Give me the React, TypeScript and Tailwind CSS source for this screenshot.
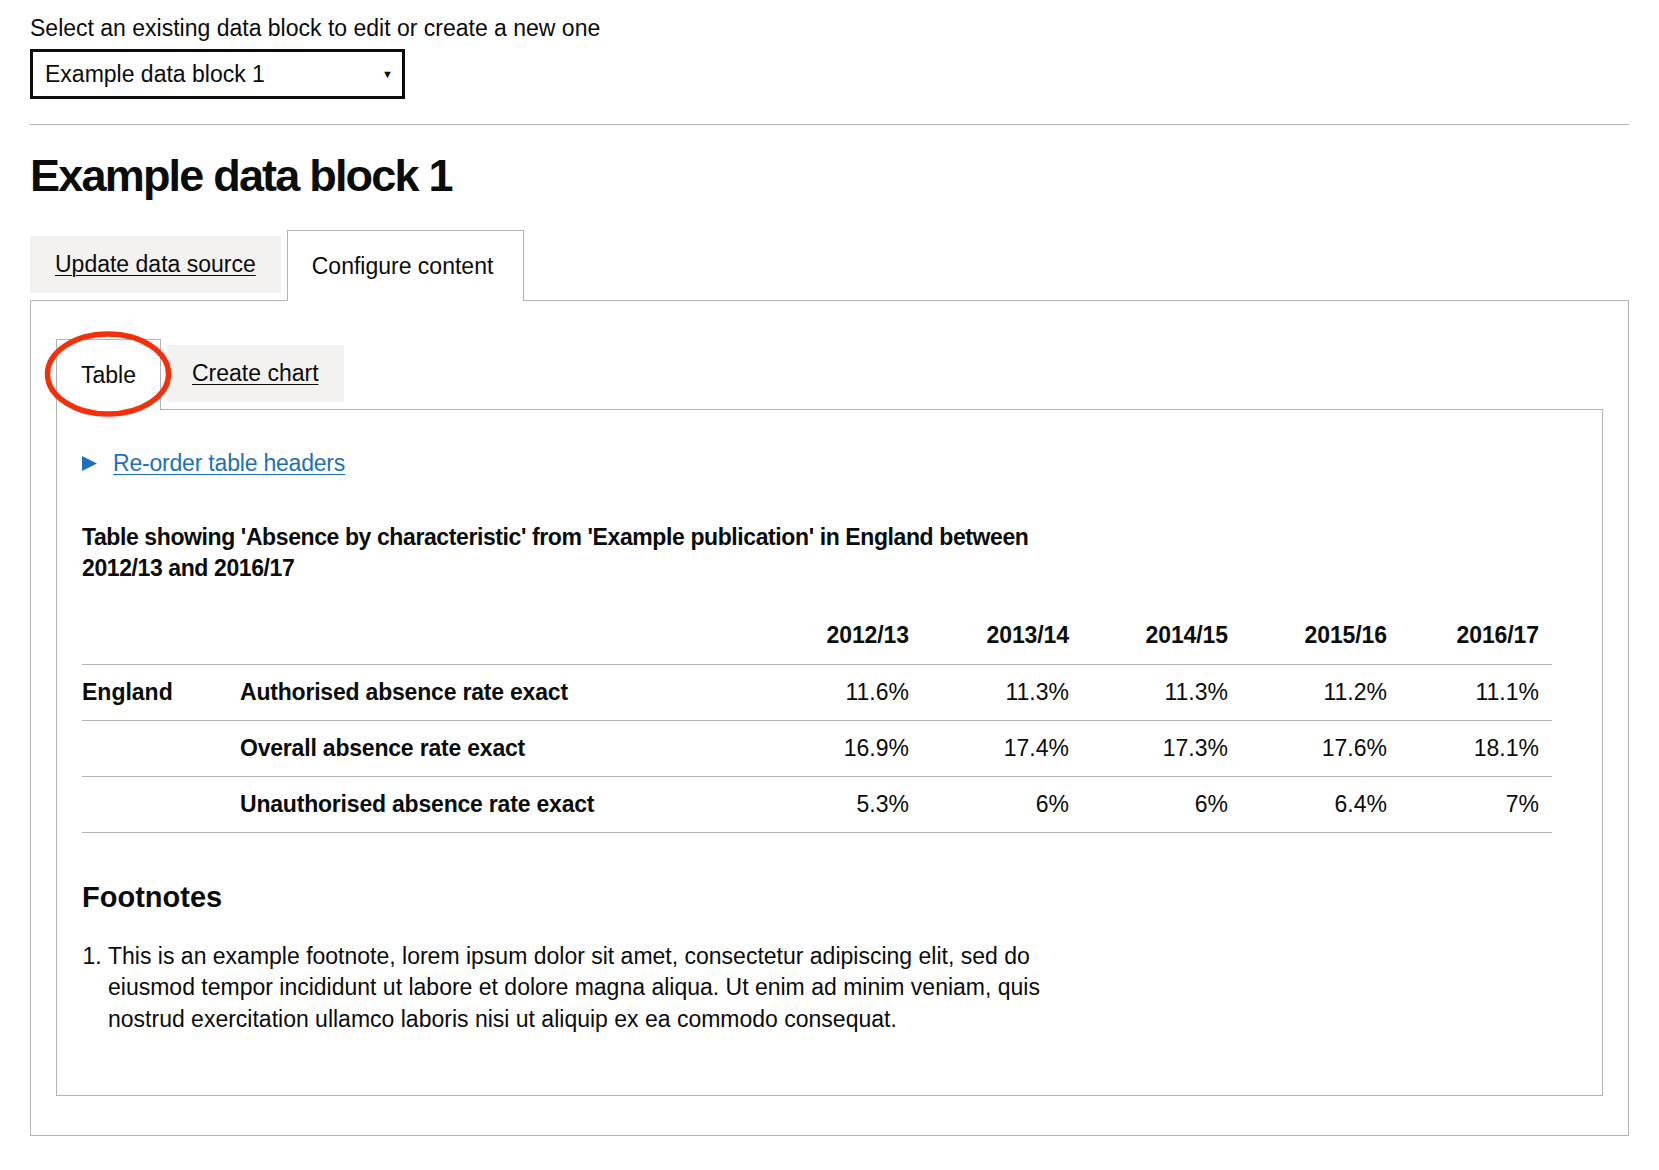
import React from "react";

type Row = {
  group?: string;
  label: string;
  values: string[];
};

const years = ["2012/13", "2013/14", "2014/15", "2015/16", "2016/17"];

const rows: Row[] = [
  { group: "England", label: "Authorised absence rate exact", values: ["11.6%", "11.3%", "11.3%", "11.2%", "11.1%"] },
  { label: "Overall absence rate exact", values: ["16.9%", "17.4%", "17.3%", "17.6%", "18.1%"] },
  { label: "Unauthorised absence rate exact", values: ["5.3%", "6%", "6%", "6.4%", "7%"] },
];

const numCols = ["w-[159px] pr-[20px]", "w-[160px] pr-[20px]", "w-[159px] pr-[20px]", "w-[159px] pr-[20px]", "w-[145px] pr-[13px]"];

const TabLink = ({ label }: { label: string }) => (
  <a href="#" className="mt-[6px] flex h-[57px] items-center bg-[#f3f2f1] px-[25px] text-[#0b0c0c] underline decoration-1 underline-offset-[3px]">
    {label}
  </a>
);

const TabSelected = ({ label, className = "" }: { label: string; className?: string }) => (
  <div className={`relative z-10 -mb-px flex h-[71px] items-center border border-b-0 border-[#b1b4b6] bg-white px-[24px] ${className}`}>
    {label}
  </div>
);

export default function App() {
  return (
    <div className="min-h-screen bg-white px-[30px] pt-[13px] text-[23px] leading-[31px] text-[#0b0c0c]" style={{ fontFamily: '"Liberation Sans", Arial, sans-serif' }}>
      <label className="block">Select an existing data block to edit or create a new one</label>
      <div className="mt-[5px] flex h-[50px] w-[375px] items-center justify-between border-[3px] border-[#0b0c0c] pl-[12px] pr-[9px]">
        <span>Example data block 1</span>
        <span className="text-[11px] leading-none">▼</span>
      </div>

      <hr className="mt-[25px] border-t border-[#b1b4b6]" />

      <h1 className="mt-[20px] text-[45px] font-bold leading-[62px] tracking-[-1.8px]">Example data block 1</h1>

      <div className="mt-[23px] flex items-start gap-[6px]">
        <TabLink label="Update data source" />
        <TabSelected label="Configure content" className="w-[237px]" />
      </div>

      <div className="border border-[#b1b4b6] px-[25px] pb-[39px] pt-[38px]">
        <div className="relative flex items-start gap-[6px]">
          <TabSelected label="Table" />
          <TabLink label="Create chart" />
          {/* red annotation circle */}
          <svg className="pointer-events-none absolute left-[-12px] top-[-8px] z-20" width="128" height="86" viewBox="0 0 128 86">
            <ellipse cx="64" cy="43" rx="60.5" ry="40" fill="none" stroke="#f4300b" strokeWidth="5.5" />
          </svg>
        </div>

        <div className="border border-[#b1b4b6] px-[25px] pb-[60px] pt-[38px]">
          <div className="flex items-center gap-[16px]">
            <svg width="15" height="15" viewBox="0 0 15 15">
              <polygon points="0,0 15,7.5 0,15" fill="#1d70b8" />
            </svg>
            <a href="#" className="tracking-[-0.2px] text-[#1d70b8] underline decoration-1 underline-offset-[3px]">Re-order table headers</a>
          </div>

          <div className="mr-[25px]">
            <p className="mt-[43px] max-w-[960px] font-bold tracking-[-0.4px]">
              Table showing 'Absence by characteristic' from 'Example publication' in England between 2012/13 and 2016/17
            </p>

            <table className="mt-[25px] w-full table-fixed border-collapse">
              <thead>
                <tr className="border-b border-[#b1b4b6]">
                  <th className="w-[158px]" />
                  <th />
                  {years.map((y, i) => (
                    <th key={y} className={`${numCols[i]} h-[55px] pb-[2px] text-right font-bold tracking-[-0.1px]`}>
                      {y}
                    </th>
                  ))}
                </tr>
              </thead>
              <tbody>
                {rows.map((r) => (
                  <tr key={r.label} className="border-b border-[#b1b4b6]">
                    <th className="h-[56px] text-left align-middle font-bold">{r.group ?? ""}</th>
                    <th className="text-left align-middle font-bold tracking-[-0.2px]">{r.label}</th>
                    {r.values.map((v, i) => (
                      <td key={i} className={`${numCols[i]} text-right align-middle`}>
                        {v}
                      </td>
                    ))}
                  </tr>
                ))}
              </tbody>
            </table>
          </div>

          <h2 className="mt-[44px] text-[29px] font-bold leading-[40px]">Footnotes</h2>
          <ol className="mt-[24px] max-w-[960px] list-decimal pl-[26px] leading-[31.5px]">
            <li>
              This is an example footnote, lorem ipsum dolor sit amet, consectetur adipiscing elit, sed do eiusmod tempor incididunt ut labore et dolore magna aliqua. Ut enim ad minim veniam, quis nostrud exercitation ullamco laboris nisi ut aliquip ex ea commodo consequat.
            </li>
          </ol>
        </div>
      </div>
    </div>
  );
}
